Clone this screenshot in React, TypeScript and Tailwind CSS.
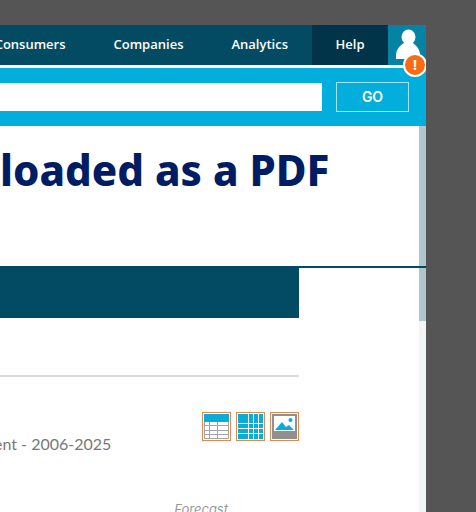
import React from "react";

function UserIcon() {
  return (
    <svg viewBox="0 0 38 40" className="h-10 w-[38px]" aria-hidden="true">
      <ellipse cx="20.5" cy="12" rx="7" ry="7.5" fill="#fff" />
      <path d="M8 34 V31 C8 25 11 21 16 18 L25 18 C29 21 32 25 32 30 V34 Z" fill="#fff" />
    </svg>
  );
}

function TableIcon() {
  return (
    <svg viewBox="0 0 25 25" className="h-[25px] w-[25px]" aria-hidden="true">
      <rect width="25" height="25" fill="#fff" />
      <path d="M.5 8V24.5H24.5V8M5.5 8V24.5M13.5 8V24.5M0 11.5H25M0 16.5H25M0 20.5H25" fill="none" stroke="#a3a3a3" />
      <rect width="25" height="8" fill="#09add8" />
    </svg>
  );
}

function GridIcon() {
  return (
    <svg viewBox="0 0 25 25" className="h-[25px] w-[25px]" aria-hidden="true">
      <rect width="25" height="25" fill="#09add8" />
      <path d="M10.5 0V25M15.5 0V25M20.5 0V25M0 9.5H25M0 14.5H25M0 19.5H25" stroke="#fff" />
    </svg>
  );
}

function ImageIcon() {
  return (
    <svg viewBox="0 0 25 25" className="h-[25px] w-[25px]" aria-hidden="true">
      <rect width="25" height="25" fill="#909090" />
      <rect x="2" y="2" width="21" height="15" fill="#fff" />
      <path d="M3 16 L10 8 L14 13 L17 11 L22 16 Z" fill="#09add8" />
      <circle cx="18.5" cy="6" r="2" fill="#09add8" />
    </svg>
  );
}

function ToolButton({ label, children }: { label: string; children: React.ReactNode }) {
  return (
    <button
      type="button"
      aria-label={label}
      className="flex h-[29px] w-[29px] items-center justify-center border border-[#df8a51] bg-white"
    >
      {children}
    </button>
  );
}

const links = ["Consumers", "Companies", "Analytics"];

export default function App() {
  return (
    <div className="h-screen overflow-hidden bg-[#555555] pt-[25px] pr-[50px] font-['Inter',sans-serif]">
      <div className="flex h-full flex-col overflow-hidden bg-white">
        <header className="shrink-0">
          <nav className="flex h-10 justify-end bg-[#024b62] font-['Open_Sans',sans-serif] text-[13px] font-semibold text-white">
            {links.map((link) => (
              <a key={link} href="#" className="flex shrink-0 items-center px-6">
                {link}
              </a>
            ))}
            <a href="#" className="flex w-[76px] shrink-0 items-center justify-center bg-[#013349]">
              Help
            </a>
            <button type="button" aria-label="Account" className="relative w-[38px] shrink-0 bg-[#0583a5]">
              <UserIcon />
              <span className="absolute -right-px -bottom-3 flex h-6 w-6 items-center justify-center rounded-full border-2 border-white bg-[#f96a16] text-sm font-bold">
                !
              </span>
            </button>
          </nav>
          <form className="mt-[3px] flex h-[58px] items-center gap-[14px] bg-[#02aedb] pr-[17px]">
            <input type="text" aria-label="Search" className="h-7 min-w-0 flex-1 bg-white outline-none" />
            <button
              type="button"
              className="h-[30px] w-[73px] border border-[#a5e2f2] text-sm font-semibold text-white"
            >
              GO
            </button>
          </form>
        </header>

        <div className="relative min-h-0 flex-1 overflow-hidden">
          <div className="absolute inset-y-0 right-0 w-[7px] bg-[#f2f5f5]">
            <div className="h-[195px] bg-[#b0c5cc]" />
          </div>
          <main className="relative">
            <h1 className="h-[140px] pt-[14px] font-['Noto_Sans',sans-serif] text-[42px] leading-[60px] font-extrabold whitespace-nowrap text-[#001c62]">
              loaded as a PDF
            </h1>
            <div className="border-t-2 border-[#024b62]">
              <div className="mr-[127px] h-[50px] bg-[#024b62]" />
            </div>
            <section className="mt-[57px] mr-[127px] border-t-2 border-[#dadada] pt-[35px]">
              <div className="flex items-start justify-between">
                <h2 className="-ml-1.5 pt-5 font-['Lato',sans-serif] text-base leading-6 whitespace-nowrap text-[#777777]">
                  ent - 2006-2025
                </h2>
                <div className="flex gap-[5px]">
                  <ToolButton label="Table">
                    <TableIcon />
                  </ToolButton>
                  <ToolButton label="Spreadsheet">
                    <GridIcon />
                  </ToolButton>
                  <ToolButton label="Image">
                    <ImageIcon />
                  </ToolButton>
                </div>
              </div>
              <p className="mt-[43px] pr-[71px] text-right text-[13px] leading-5 text-[#999999] italic">Forecast</p>
            </section>
          </main>
        </div>
      </div>
    </div>
  );
}
